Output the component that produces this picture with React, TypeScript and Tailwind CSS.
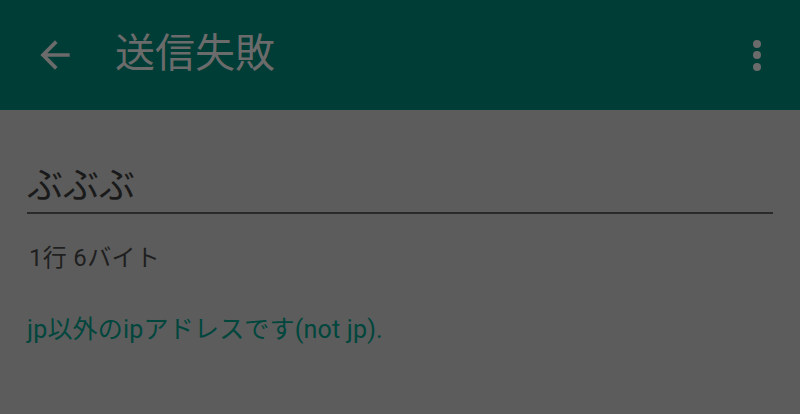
const font = { fontFamily: 'Roboto, "Noto Sans CJK JP", "Noto Sans", sans-serif' };

const App = () => {
    return (
        <div className="w-[800px] h-[414px] bg-[#5c5c5c] flex flex-col overflow-hidden" style={font}>
            <div className="h-[110px] bg-[#003d36] flex flex-row items-center shrink-0">
                <div className="w-[110px] h-full flex items-center justify-center">
                    <svg width="44" height="44" viewBox="0 0 24 24">
                        <path d="M20 11H7.83l5.59-5.59L12 4l-8 8 8 8 1.41-1.41L7.83 13H20v-2z" fill="#6b6b6b" />
                    </svg>
                </div>
                <div className="text-[40px] leading-none text-[#6b6b6b] ml-[5px] -mt-[2px]">送信失敗</div>
                <div className="ml-auto w-[40px] mr-[23px] h-full flex flex-col items-center justify-center gap-[3.5px]">
                    <span className="w-[8px] h-[8px] rounded-full bg-[#6b6b6b]" />
                    <span className="w-[8px] h-[8px] rounded-full bg-[#6b6b6b]" />
                    <span className="w-[8px] h-[8px] rounded-full bg-[#6b6b6b]" />
                </div>
            </div>
            <div className="flex flex-col px-[27px] pt-[54px]">
                <div className="border-b-2 border-[#2a2a2a] pb-[4px]">
                    <div className="text-[36px] leading-[44px] text-[#1a1a1a]">ぶぶぶ</div>
                </div>
                <div className="mt-[28px] text-[24px] leading-[32px] text-[#1f1f1f] pl-[2px] tracking-[0.3px]">1行 6バイト</div>
                <div className="mt-[40px] text-[25px] leading-[32px] text-[#00463c] tracking-[0.2px]">jp以外のipアドレスです(not jp).</div>
            </div>
        </div>
    );
};

export default App;
